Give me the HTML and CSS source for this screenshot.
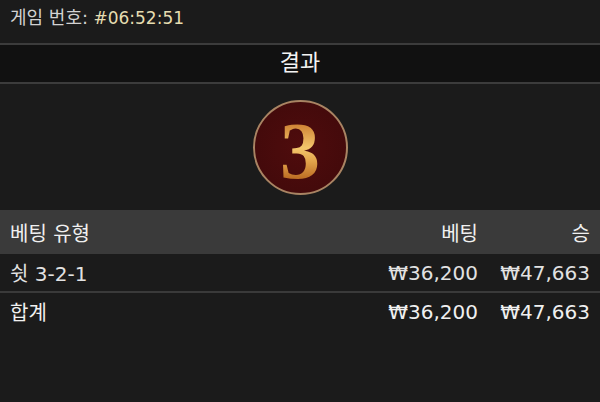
FILE: index.html
```html
<!DOCTYPE html>
<html lang="ko">

<head>
    <meta charset="UTF-8">
    <meta name="viewport" content="width=device-width, initial-scale=1.0">
    <title>게임 결과</title>
    <link rel="stylesheet" href="styles.css">
</head>

<body>

    <div class="game-info">
        <span class="label">게임 번호:</span> <span class="game-id">#06:52:51</span>
    </div>

    <div class="section-title">결과</div>

    <!-- Result ball -->
    <div class="result">
        <div class="ball"><span class="ball-num">3</span></div>
    </div>

    <table class="bets">
        <thead>
            <tr>
                <th class="type">베팅 유형</th>
                <th class="num">베팅</th>
                <th class="num win">승</th>
            </tr>
        </thead>
        <tbody>
            <tr class="bet-row">
                <td class="type">쉿 3-2-1</td>
                <td class="num">₩36,200</td>
                <td class="num win">₩47,663</td>
            </tr>
            <tr class="total-row">
                <td class="type">합계</td>
                <td class="num">₩36,200</td>
                <td class="num win">₩47,663</td>
            </tr>
        </tbody>
    </table>

</body>

</html>
```

FILE: styles.css
```css
* {
    margin: 0;
    padding: 0;
    box-sizing: border-box;
}

body {
    font-family: 'DejaVu Sans', 'Noto Sans CJK KR', sans-serif;
    background-color: #1b1b1b;
    color: #e6e6e6;
    width: 600px;
    height: 402px;
    overflow: hidden;
}

.game-info {
    height: 43px;
    padding: 4px 10px 0;
    font-size: 17px;
    line-height: 28px;
    color: #d2d2d2;
}

.game-info .label {
    font-size: 18px;
}

.game-id {
    color: #e6ddb0;
}

.section-title {
    height: 41px;
    background: #111;
    border-top: 2px solid #3c3c3c;
    border-bottom: 2px solid #3c3c3c;
    text-align: center;
    font-size: 22px;
    line-height: 36px;
    color: #f4f4f4;
}

.result {
    display: flex;
    justify-content: center;
    padding: 16px 0;
    height: 126px;
}

.ball {
    width: 95px;
    height: 95px;
    border-radius: 50%;
    border: 2px solid #a98463;
    background: radial-gradient(circle at 50% 50%, #4f0c0d 0%, #440a0b 70%, #3a0708 100%);
    display: flex;
    justify-content: center;
    align-items: center;
}

.ball-num {
    font-family: 'Liberation Serif', 'DejaVu Serif', serif;
    font-weight: bold;
    font-size: 80px;
    line-height: 1;
    padding-top: 6px;
    background: linear-gradient(180deg, #c9782c 18%, #f3c66c 50%, #e3a54c 65%, #b8661f 88%);
    -webkit-background-clip: text;
    background-clip: text;
    color: transparent;
}

.bets {
    width: 100%;
    border-collapse: collapse;
    font-size: 20px;
}

.bets th {
    background: #3a3a3a;
    height: 44px;
    font-weight: normal;
    color: #f0f0f0;
}

.bets td {
    height: 38px;
    color: #e2e2e2;
}

.bet-row td {
    border-bottom: 2px solid #3a3a3a;
}

.total-row td {
    color: #f0f0f0;
}

.type {
    text-align: left;
    padding-left: 10px;
}

.num {
    text-align: right;
    width: 100px;
}

.win {
    width: 122px;
    padding-right: 10px;
}
```
